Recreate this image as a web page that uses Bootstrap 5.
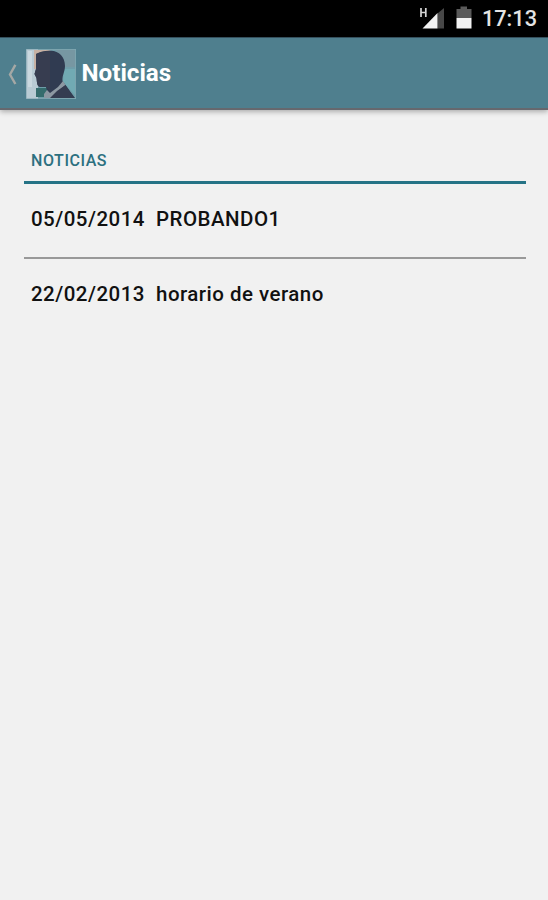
<!DOCTYPE html>
<html lang="es">
<head>
<meta charset="utf-8">
<meta name="viewport" content="width=device-width, initial-scale=1">
<title>Noticias</title>
<link href="https://cdn.jsdelivr.net/npm/bootstrap@5.3.0/dist/css/bootstrap.min.css" rel="stylesheet">
<style>
body{font-family:Roboto,"Liberation Sans",sans-serif;background:#f1f1f1;color:#111;min-height:900px;overflow:hidden}
.status-bar{height:37px;background:#000;color:#e4e4e4;padding-right:11px}
.status-bar svg{display:block}
.clock{font-size:21.7px;font-weight:500;line-height:37px;margin-left:10px}
.app-bar{height:73px;background:#4f7f8e;border-top:1px solid #35505d;border-bottom:2px solid #66686e;box-shadow:0 2px 5px rgba(0,0,0,.28);padding-left:7px}
.app-bar svg{margin-top:2px}
.app-title{font-size:24.2px;font-weight:700;color:#fff;line-height:30px;margin-left:5.5px}
.news{padding:40px 22px 0 24px}
.news-head{font-size:16px;font-weight:500;letter-spacing:.55px;line-height:22px;color:#2d7080;padding:0 7px 9px;border-bottom:3px solid #257386}
.news-row{font-size:20.5px;font-weight:500;letter-spacing:.47px;line-height:26px;padding:22px 7px 0;height:73px;white-space:pre}
.news-row + .news-row{border-top:2px solid #999}
</style>
</head>
<body>
<div class="status-bar d-flex justify-content-end">
  <svg width="53" height="37" viewBox="0 0 53 37" aria-hidden="true">
    <path d="M2 8V17M6.8 8V17M2 12.5H7" stroke="#d5d5d5" stroke-width="1.7" fill="none"/>
    <path d="M18.5 13.5L25 8V28.5H18.5Z" fill="#484848"/>
    <path d="M3.5 28.5L18.5 13V28.5Z" fill="#f2f2f2"/>
    <path d="M37.5 9H41.5V6.5H48V9H52.5V18H37.5Z" fill="#5a5a5a"/>
    <path d="M37.5 18H52.5V28.5H37.5Z" fill="#f2f2f2"/>
  </svg>
  <span class="clock" id="clock">17:13</span>
</div>
<header class="app-bar d-flex align-items-center">
  <svg width="11" height="24" viewBox="0 0 11 24" aria-hidden="true"><path d="M8.4 2.8L3 12.5L8.4 22" fill="none" stroke="#a5a8a5" stroke-width="2.4"/></svg>
  <svg class="ms-2" width="50" height="50" viewBox="0 0 50 50" aria-hidden="true">
    <path d="M0 0H50V50H0Z" fill="#6f9da9"/>
    <path d="M0 0H12V50H0Z" fill="#b9cbd4"/>
    <path d="M2 2H6V38H2Z" fill="#cad8df"/>
    <path d="M8 1H25L12 6L10 20H8Z" fill="#c7b1a3"/>
    <path d="M30 1H49V18H38Z" fill="#7797a2"/>
    <path d="M38 20H49V46L37 33Z" fill="#71aab3"/>
    <path d="M10 39H21V48H10Z" fill="#356c6d"/>
    <path d="M10 5C15 2 20 1.5 25 1.8C33 2 39 8 39 17C39 23 36 26 36.5 32L49 49H23L20 38H15C11 38 11 34 10.5 29L8.5 25L10 20Z" fill="#303b51"/>
    <path d="M10 5C15 3 20 2 24 2V42L20 38H15C11 38 11 34 10.5 29L8.5 25L10 20Z" fill="#373d50"/>
    <path d="M37 32L39.5 36L34 40.5L25 49H18V45L21 41L24 44L32 38Z" fill="#8c98a2"/>
    <path d="M31 42L39.5 36L48 49H24Z" fill="#343c50"/>
    <path d="M0 .5H50M.5 0V50M49.5 0V50M0 49.5H50" stroke="#86a8b2" stroke-opacity=".6"/>
  </svg>
  <h1 class="app-title mb-0">Noticias</h1>
</header>
<main class="news">
  <h2 class="news-head mb-0">NOTICIAS</h2>
  <div class="news-row">05/05/2014  PROBANDO1</div>
  <div class="news-row">22/02/2013  horario de verano</div>
</main>
<script src="https://cdn.jsdelivr.net/npm/bootstrap@5.3.0/dist/js/bootstrap.bundle.min.js"></script>
</body>
</html>
